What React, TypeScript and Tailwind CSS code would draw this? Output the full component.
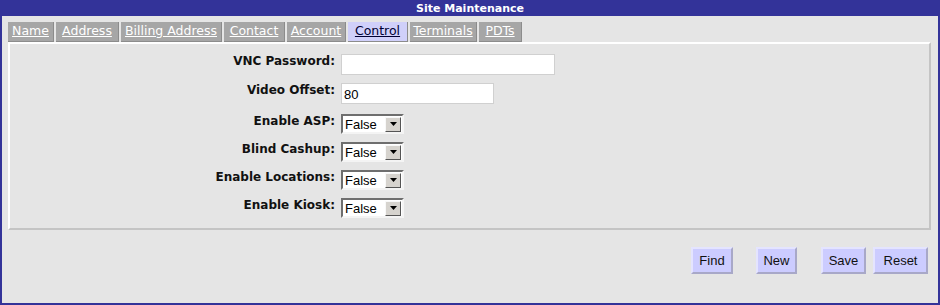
import React from "react";

const tabs = [
  { label: "Name", w: "w-[46px]" },
  { label: "Address", w: "w-[63px]" },
  { label: "Billing Address", w: "w-[101px]" },
  { label: "Contact", w: "w-[61px]" },
  { label: "Account", w: "w-[59px]" },
  { label: "Control", w: "w-[60px]", active: true },
  { label: "Terminals", w: "w-[67px]" },
  { label: "PDTs", w: "w-[43px]" },
];

const FakeSelect: React.FC<{ value: string }> = ({ value }) => (
  <div className="flex h-[20px] w-[63px] items-center border-2 border-t-[#6e6e6e] border-l-[#6e6e6e] border-r-[#f4f4f4] border-b-[#f4f4f4] bg-white">
    <span className="flex-1 pl-[2px] font-['Liberation_Sans',Arial,sans-serif] text-[13px] leading-none text-black">
      {value}
    </span>
    <div className="mr-[1px] flex h-[15px] w-[16px] items-center justify-center border border-t-[#f8f8f8] border-l-[#f8f8f8] border-r-[#555] border-b-[#555] bg-[#d6d3ce]">
      <svg width="7" height="4" viewBox="0 0 7 4">
        <path d="M0 0h7L3.5 4z" fill="#000" />
      </svg>
    </div>
  </div>
);

const rows: { label: string; kind: "wide" | "mid" | "select"; value?: string; rowClass: string }[] = [
  { label: "VNC Password:", kind: "wide", rowClass: "mt-[12px] h-[21px]" },
  { label: "Video Offset:", kind: "mid", value: "80", rowClass: "mt-[8px] h-[21px]" },
  { label: "Enable ASP:", kind: "select", value: "False", rowClass: "mt-[10px] h-[20px]" },
  { label: "Blind Cashup:", kind: "select", value: "False", rowClass: "mt-[8px] h-[20px]" },
  { label: "Enable Locations:", kind: "select", value: "False", rowClass: "mt-[8px] h-[20px]" },
  { label: "Enable Kiosk:", kind: "select", value: "False", rowClass: "mt-[8px] h-[20px]" },
];

const buttons = [
  { label: "Find", w: "w-[42px]", ml: "" },
  { label: "New", w: "w-[41px]", ml: "ml-[23px]" },
  { label: "Save", w: "w-[45px]", ml: "ml-[24px]" },
  { label: "Reset", w: "w-[55px]", ml: "ml-[7px]" },
];

export default function App() {
  return (
    <div className="flex h-[305px] w-[940px] flex-col border-2 border-t-0 border-[#333399] bg-[#e5e5e5]">
      {/* Title bar */}
      <div className="flex h-[16px] shrink-0 items-center justify-center bg-[#333399] font-['DejaVu_Sans',Verdana,sans-serif] text-[11px] font-bold leading-none text-white">
        Site Maintenance
      </div>

      <div className="flex flex-1 flex-col pl-[6px] pr-[7px] pt-[6px]">
        {/* Tabs */}
        <div className="flex h-[20px] gap-[2px]">
          {tabs.map((t) => (
            <div
              key={t.label}
              className={`flex h-full ${t.w} items-center justify-center border-r border-b border-[#8c8c8c] font-['DejaVu_Sans',Verdana,sans-serif] text-[12.5px] leading-none underline ${
                t.active ? "bg-[#d0d0fa] text-[#000033]" : "bg-[#a6a6a6] text-white"
              }`}
            >
              {t.label}
            </div>
          ))}
        </div>

        {/* Panel */}
        <div className="flex h-[188px] flex-col border-2 border-t-white border-l-white border-r-[#c4c4c4] border-b-[#c4c4c4] bg-[#e5e5e5]">
          <div className="-mt-[2px] flex flex-col">
            {rows.map((r) => (
              <div key={r.label} className={`flex items-start ${r.rowClass}`}>
                <div className="w-[325px] text-right font-['DejaVu_Sans',Verdana,sans-serif] text-[12px] font-bold leading-[14px] text-[#111]">
                  {r.label}
                </div>
                <div className="ml-[6px]">
                  {r.kind === "wide" && (
                    <div className="h-[21px] w-[214px] border border-[#d0d0d0] bg-white" />
                  )}
                  {r.kind === "mid" && (
                    <div className="flex h-[21px] w-[153px] items-center border border-[#d0d0d0] bg-white pl-[2px] pt-[3px] font-['Liberation_Sans',Arial,sans-serif] text-[13px] text-black">
                      {r.value}
                    </div>
                  )}
                  {r.kind === "select" && <FakeSelect value={r.value ?? ""} />}
                </div>
              </div>
            ))}
          </div>
        </div>

        {/* Buttons */}
        <div className="mt-[17px] flex justify-end pr-[3px]">
          {buttons.map((b) => (
            <div
              key={b.label}
              className={`flex h-[27px] ${b.w} ${b.ml} items-center justify-center border-2 border-t-[#e4e4ff] border-l-[#e4e4ff] border-r-[#a8a8c8] border-b-[#a8a8c8] bg-[#ccccff] font-['Liberation_Sans',Arial,sans-serif] text-[13px] text-[#111]`}
            >
              {b.label}
            </div>
          ))}
        </div>
      </div>
    </div>
  );
}
